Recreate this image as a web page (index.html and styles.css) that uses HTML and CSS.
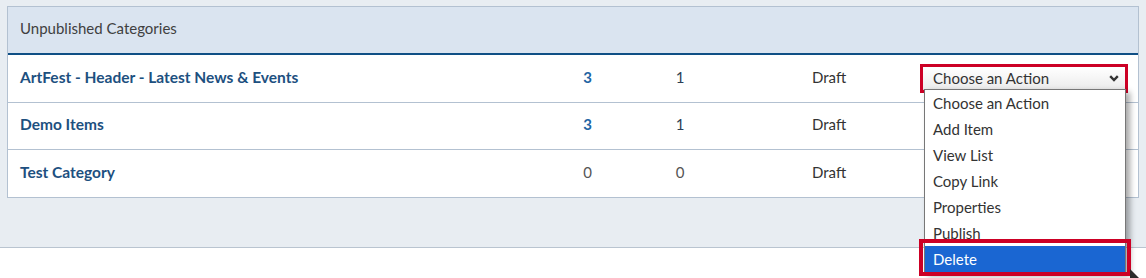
FILE: index.html
```html
<!DOCTYPE html>
<html>
<head>
<meta charset="utf-8">
<link rel="stylesheet" href="styles.css">
</head>
<body>
<div class="stage">
  <div class="panel">
    <div class="panel-head">Unpublished Categories</div>
    <div class="row">
      <div class="cell name">ArtFest - Header - Latest News &amp; Events</div>
      <div class="cell num link">3</div>
      <div class="cell num">1</div>
      <div class="cell status">Draft</div>
      <div class="cell action">
        <div class="select-box">
          <div class="select">
            <span>Choose an Action</span>
            <svg class="chev" width="10" height="7" viewBox="0 0 10 7"><path d="M1.2 1.2 L5 5 L8.8 1.2" fill="none" stroke="#333" stroke-width="2.4"/></svg>
          </div>
          <div class="menu">
            <div class="opt">Choose an Action</div>
            <div class="opt">Add Item</div>
            <div class="opt">View List</div>
            <div class="opt">Copy Link</div>
            <div class="opt">Properties</div>
            <div class="opt">Publish</div>
            <div class="opt sel">Delete</div>
            <div class="mark"></div>
          </div>
        </div>
      </div>
    </div>
    <div class="row mid">
      <div class="cell name">Demo Items</div>
      <div class="cell num link">3</div>
      <div class="cell num">1</div>
      <div class="cell status">Draft</div>
      <div class="cell action"></div>
    </div>
    <div class="row">
      <div class="cell name">Test Category</div>
      <div class="cell num plain">0</div>
      <div class="cell num plain">0</div>
      <div class="cell status">Draft</div>
      <div class="cell action"></div>
    </div>
  </div>
</div>
<svg class="cursor" width="12" height="12" viewBox="0 0 12 12"><polygon points="0,0 10,10 0,12" fill="#2b2b2b"/></svg>
</body>
</html>
```

FILE: styles.css
```css
* { box-sizing: border-box; }
html, body { margin: 0; padding: 0; }
body {
  width: 1146px;
  height: 278px;
  overflow: hidden;
  background: #ffffff;
  font-family: Lato, "Noto Sans", sans-serif;
  font-size: 15px;
  color: #333;
  position: relative;
}
.stage {
  background: #e8edf2;
  padding: 6px 7px 0 7px;
  height: 248px;
  border-bottom: 1px solid #b9c4d0;
}
.panel {
  border: 1px solid #b3c1d1;
  background: #fff;
}
.panel-head {
  height: 48px;
  background: #dae4f0;
  border-bottom: 2px solid #0f4f85;
  padding: 0 0 4px 12px;
  display: flex;
  align-items: center;
  font-size: 15px;
  color: #404040;
}
.row {
  display: grid;
  grid-template-columns: 532px 95px 90px 188px 1fr;
  height: 48px;
  border-bottom: 1px solid #b3c1d1;
}
.row.mid { height: 47px; }
.row:last-child { border-bottom: none; height: 47px; }
.cell {
  display: flex;
  align-items: center;
  padding-bottom: 4px;
}
.name {
  padding-left: 12px;
  font-weight: 700;
  color: #1d5080;
  font-size: 15.5px;
}
.num { justify-content: center; color: #2c3e55; }
.num.link { font-weight: 700; color: #1f65a3; }
.num.plain { color: #555; }
.status { padding-left: 87px; color: #333; }
.action {
  padding-left: 7px;
  align-items: flex-start;
  padding-top: 9px;
}
.select-box {
  position: relative;
  width: 208px;
  height: 29px;
  border: 3px solid #cc0025;
}
.select {
  height: 23px;
  background: linear-gradient(#ffffff, #ececec);
  border-bottom: 1px solid #c8c8c8;
  display: flex;
  align-items: center;
  justify-content: space-between;
  padding: 0 6px 1px 10px;
  font-size: 15px;
  color: #333;
}
.chev { margin-top: 1px; }
.menu {
  position: absolute;
  left: 1px;
  top: 22px;
  width: 202px;
  background: #fff;
  border: 1px solid #777;
  box-shadow: 4px 3px 6px rgba(0, 0, 0, 0.35);
  z-index: 5;
}
.opt {
  height: 26px;
  line-height: 26px;
  padding-left: 8px;
  font-size: 15px;
  color: #333;
}
.opt.sel {
  background: #1a66d2;
  color: #fff;
}
.mark {
  position: absolute;
  left: -6px;
  top: 149px;
  width: 212px;
  height: 37px;
  border: 4px solid #cc0025;
}
.cursor {
  position: absolute;
  left: 1130px;
  top: 269px;
  z-index: 9;
}
```
